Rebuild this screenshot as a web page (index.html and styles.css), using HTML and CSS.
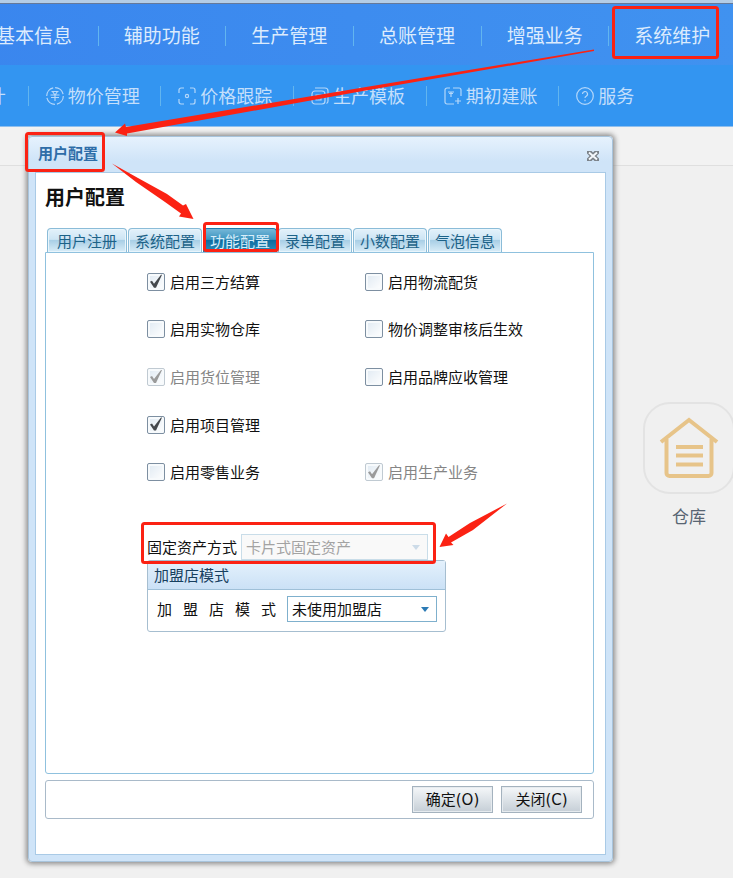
FILE: index.html
```html
<!DOCTYPE html>
<html lang="zh-CN">
<head>
<meta charset="utf-8">
<title>用户配置</title>
<link rel="stylesheet" href="styles.css">
</head>
<body>
<header class="top">
  <nav class="menu">
    <a href="#">基本信息</a>
    <a href="#">辅助功能</a>
    <a href="#">生产管理</a>
    <a href="#">总账管理</a>
    <a href="#">增强业务</a>
    <a href="#">系统维护</a>
  </nav>
  <nav class="submenu">
    <a href="#" class="submenu-cut">计</a>
    <a href="#"><svg class="icon" viewBox="0 0 18 18"><circle cx="9" cy="9" r="8.3" stroke-dasharray="11 2"/><path d="M5.500 4.500h7M6.500 4.500 9 8l2.500-3.500M4.500 8h9M5 10.500h8M9 8v6"/></svg>物价管理</a>
    <a href="#"><svg class="icon" viewBox="0 0 18 18"><path d="M1 6V3a2 2 0 0 1 2-2h3M12 1h3a2 2 0 0 1 2 2v3M17 12v3a2 2 0 0 1-2 2h-3M6 17H3a2 2 0 0 1-2-2v-3"/><circle cx="9" cy="9" r="1.600"/></svg>价格跟踪</a>
    <a href="#"><svg class="icon" viewBox="0 0 18 18"><rect x="1" y="4" width="13" height="13" rx="3"/><path d="M4 1h10a3 3 0 0 1 3 3v10c0 1-.5 2-1.500 2.500M5 8h5v5H5z"/></svg>生产模板</a>
    <a href="#"><svg class="icon" viewBox="0 0 18 18"><path d="M10 17H3a2 2 0 0 1-2-2V3a2 2 0 0 1 2-2h3M9 1h6a2 2 0 0 1 2 2v6M14 11v6M11 14h6M4 5h6M5 6.500h4M7 5v5"/></svg>期初建账</a>
    <a href="#"><svg class="icon" viewBox="0 0 18 18"><circle cx="9" cy="9" r="8.3"/><path d="M6.500 7a2.500 2.500 0 1 1 3.700 2.200C9.300 9.700 9 10 9 11M9 12.800v1.400"/></svg>服务</a>
  </nav>
</header>
<div class="strip"></div>
<main class="stage">
  <section class="dialog" aria-labelledby="dialog-title">
    <div class="dialog-bar">
      <span id="dialog-title">用户配置</span>
      <button type="button" class="close" aria-label="关闭">
        <svg viewBox="0 0 12 10"><path class="x-edge" d="M0 0h4.500L6 1.500 7.500 0H12v2.500L9.500 5 12 7.500V10H7.500L6 8.500 4.500 10H0V7.500L2.500 5 0 2.500z"/><path class="x-core" d="M2 1.500l8 7M10 1.500l-8 7"/></svg>
      </button>
    </div>
    <div class="dialog-body">
      <h1>用户配置</h1>
      <div class="tabs" role="tablist">
        <button type="button" role="tab">用户注册</button>
        <button type="button" role="tab">系统配置</button>
        <button type="button" role="tab" aria-selected="true">功能配置</button>
        <button type="button" role="tab">录单配置</button>
        <button type="button" role="tab">小数配置</button>
        <button type="button" role="tab">气泡信息</button>
      </div>
      <div class="pane" role="tabpanel">
        <div class="options">
          <label><input type="checkbox" checked>启用三方结算</label>
          <label><input type="checkbox">启用物流配货</label>
          <label><input type="checkbox">启用实物仓库</label>
          <label><input type="checkbox">物价调整审核后生效</label>
          <label class="off"><input type="checkbox" checked disabled>启用货位管理</label>
          <label><input type="checkbox">启用品牌应收管理</label>
          <label class="solo"><input type="checkbox" checked>启用项目管理</label>
          <label><input type="checkbox">启用零售业务</label>
          <label class="off"><input type="checkbox" checked disabled>启用生产业务</label>
        </div>
        <div class="field">
          <label for="asset">固定资产方式</label>
          <span class="pick pick-wide pick-off"><select id="asset" disabled><option>卡片式固定资产</option></select></span>
        </div>
        <section class="group">
          <h2>加盟店模式</h2>
          <div class="group-row">
            <label for="store" class="spread"><span>加</span><span>盟</span><span>店</span><span>模</span><span>式</span></label>
            <span class="pick"><select id="store"><option>未使用加盟店</option></select></span>
          </div>
        </section>
      </div>
      <div class="actions">
        <button type="button">确定(O)</button>
        <button type="button">关闭(C)</button>
      </div>
    </div>
  </section>
  <a href="#" class="tile">
    <span class="tile-box">
      <svg viewBox="0 0 60 62"><path d="M2 25 30 3l28 22"/><path d="M7.500 22v34a3 3 0 0 0 3 3h39a3 3 0 0 0 3-3V22"/><path d="M17 30h27M17 38.500h27M17 47.500h27"/></svg>
    </span>
    仓库
  </a>
</main>
<svg class="notes" viewBox="0 0 733 878" aria-hidden="true">
  <g class="frames">
    <rect x="613.500" y="7.500" width="104" height="50" rx="2"/>
    <rect x="26.500" y="133.500" width="77" height="37" rx="2"/>
    <rect x="204.500" y="223.500" width="73" height="27" rx="2"/>
    <rect x="142.500" y="523.500" width="292" height="39" rx="2"/>
  </g>
  <g class="arrows">
    <path d="M594 49.500 363 87.500 126 127 125 123.500 115 132.500 127 136 127 133.500 363 91 594 51z"/>
    <path d="M112 163.500 138 178 167 194 183 205.500 186 204 193.500 219 179 216.500 181 213.500 165 202 136 182z"/>
    <path d="M507 503.500 470 523 448.500 537 446 533.500 439.500 547 453.500 545 451 542.500 473 530z"/>
  </g>
</svg>
</body>
</html>
```
FILE: styles.css
```css
* { box-sizing: border-box; }

body {
  position: relative;
  margin: 0;
  min-height: 100vh;
  overflow-x: hidden;
  background: #f0f0f0;
  color: #111;
  font: 15px/20px "Open Sans", "Noto Sans CJK SC", sans-serif;
}

a { color: inherit; text-decoration: none; }
button, select { font: inherit; }

/* top navigation */
.top {
  border-top: 3px solid #b4cde6;
  border-bottom: 1px solid #8fbfee;
  overflow: hidden;
  color: #dcebfd;
}

.menu, .submenu { display: flex; }

.menu {
  height: 62px;
  padding-top: 2px;
  border-top: 1px solid #65799a;
  margin: 0 -3px 0 -30px;
  background: linear-gradient(90deg, #3a86ee, #4092f0);
  font-size: 19px;
}

.submenu {
  height: 61px;
  padding: 0 42px 0 0;
  margin-left: -105px;
  background: #3395f1;
  color: #c4dffb;
  font-size: 18px;
}

.menu a, .submenu a {
  position: relative;
  display: flex;
  flex: none;
  width: calc(100% / 6);
  align-items: center;
  white-space: nowrap;
}

.menu a { padding-left: 26px; }
.submenu a { gap: 4px; padding-left: 18px; }
.submenu .submenu-cut { justify-content: flex-end; padding-right: 22px; }

.menu a + a::before, .submenu a + a::before {
  content: "";
  position: absolute;
  left: 0;
  width: 1px;
  height: 20px;
  background: #62b5ef;
}

.icon {
  flex: none;
  width: 18px;
  height: 18px;
  fill: none;
  stroke: #b4d7fa;
  stroke-width: 1.2;
}

.strip {
  height: 39px;
  background: #f2f2f2;
  border-bottom: 1px solid #dfdfdf;
}

/* dialog */
.stage {
  display: flex;
  align-items: flex-start;
  margin: -30px -2px 0 28px;
}

.dialog {
  position: relative;
  flex: 1;
  padding: 0 6px 6px;
  border: 1px solid #a8c4dc;
  border-radius: 4px;
  background: linear-gradient(#e6f2fd, #cfe4f8 24px);
  box-shadow: 0 0 5px 2px #8e8e8e;
}

.dialog-bar {
  display: flex;
  align-items: center;
  justify-content: space-between;
  height: 35px;
  padding: 0 7px 4px 3px;
  color: #2e6da8;
  font-weight: 700;
}

.close {
  width: 12px;
  height: 10px;
  margin-top: 7px;
  padding: 0;
  border: 0;
  background: none;
}

.close svg { display: block; }
.x-edge { fill: #7b8289; }
.x-core { stroke: #f4f8fc; stroke-width: 2; }

.dialog-body {
  padding: 11px 11px 35px 9px;
  border: 1px solid #a9cae6;
  background: #fff;
}

h1 {
  margin: 0 0 16px;
  font-size: 20px;
  font-weight: 700;
  line-height: 28px;
}

.tabs { display: flex; gap: 1px; padding-left: 2px; }

.tabs button {
  height: 24px;
  padding: 0 6px;
  border: 1px solid #8bbcd8;
  border-bottom: 0;
  border-radius: 4px 4px 0 0;
  background: linear-gradient(#e3f1fa, #cde5f4 45%, #a9cfe6 50%, #d9edf8);
  box-shadow: inset 0 0 0 1px #e8f5fc;
  color: #1c6288;
  line-height: 22px;
  white-space: nowrap;
}

.tabs button:first-child { padding: 0 9px; }

.tabs button[aria-selected="true"] {
  border-color: #1e7cac;
  background: linear-gradient(#74b7d8, #3c94bf 45%, #0f6c9e 50%, #2c8dba);
  box-shadow: none;
  color: #d8eefa;
}

.pane {
  padding: 5px 20px 141px 101px;
  border: 1px solid #8fc1de;
  border-radius: 0 0 3px 3px;
}

.options {
  display: grid;
  grid-template-columns: 218px 1fr;
  grid-template-rows: repeat(5, 1fr);
  height: 238px;
}

.options label { display: flex; align-items: center; gap: 5px; }
.options .solo { grid-column: 1 / -1; }
.options .off { color: #858585; }

.options input {
  position: relative;
  appearance: none;
  width: 18px;
  height: 18px;
  margin: 0;
  border: 1px solid #7d8fa1;
  border-radius: 2px;
  background: linear-gradient(135deg, #dfe9f2, #fff);
  box-shadow: inset 0 0 0 2px #f7fafc;
}

.options input:checked::before {
  content: "";
  position: absolute;
  inset: 0;
  background: #44484c;
  clip-path: polygon(2px 8px, 4px 7px, 6px 10px, 13px 1px, 14px 1px, 8px 14px, 6px 14px);
}

.options input:disabled { border-color: #c0cad2; }
.options input:disabled::before { background: #9b9b9b; }

.field {
  display: flex;
  align-items: center;
  gap: 4px;
  margin-top: 38px;
}

.pick { position: relative; display: block; width: 150px; }
.pick-wide { width: 187px; }

.pick select {
  display: block;
  appearance: none;
  width: 100%;
  height: 26px;
  padding: 0 4px;
  border: 1px solid #7fb0cd;
  border-radius: 0;
  background: #fff;
  color: #111;
  opacity: 1;
}

.pick::after {
  content: "";
  position: absolute;
  top: 11px;
  right: 8px;
  border: 4px solid transparent;
  border-top: 5px solid #2c7bb5;
  border-bottom: 0;
}

.pick-off select { border-color: #c9dde9; background: #f9f9f9; color: #a3a3a3; }
.pick-off::after { border-top-color: #ccdbe8; }

.group {
  width: 299px;
  border: 1px solid #a6bed0;
  border-radius: 3px;
}

h2 {
  height: 29px;
  margin: 0;
  padding: 0 6px;
  border-bottom: 1px solid #9fc0d8;
  background: linear-gradient(#e4f1fc, #cbe1f6);
  color: #17405f;
  font-size: 15px;
  font-weight: 400;
  line-height: 28px;
}

.group-row {
  display: flex;
  align-items: center;
  gap: 11px;
  padding: 6px 8px 9px 9px;
}

.spread { display: flex; gap: 11px; }

.actions {
  display: flex;
  justify-content: flex-end;
  gap: 8px;
  margin-top: 6px;
  padding: 5px 11px;
  border: 1px solid #a9bac9;
  border-radius: 3px;
}

.actions button {
  width: 81px;
  height: 27px;
  padding: 0;
  border: 1px solid #a4b2be;
  background: linear-gradient(#f5f7f9, #dde3e8 50%, #c5ced6);
  box-shadow: inset 0 0 0 1px #e6ebef;
  color: #111;
  font-family: "DejaVu Sans", "Noto Sans CJK SC", sans-serif;
}

/* desktop shortcut */
.tile {
  display: flex;
  flex-direction: column;
  align-items: center;
  gap: 13px;
  width: 92px;
  margin: 266px 0 0 30px;
  color: #586573;
  font-size: 17px;
}

.tile-box {
  display: grid;
  place-items: center;
  width: 92px;
  height: 92px;
  border: 2px solid #e3e3e3;
  border-radius: 27px;
}

.tile-box svg {
  width: 60px;
  height: 62px;
  fill: none;
  stroke: #e7c489;
  stroke-width: 4;
}

/* red call-outs drawn over the screen */
.notes {
  position: absolute;
  top: 0;
  left: 0;
  width: 733px;
  height: 878px;
  pointer-events: none;
}

.frames { fill: none; stroke: #fb2213; stroke-width: 3; }
.arrows { fill: #fb2213; }
```
